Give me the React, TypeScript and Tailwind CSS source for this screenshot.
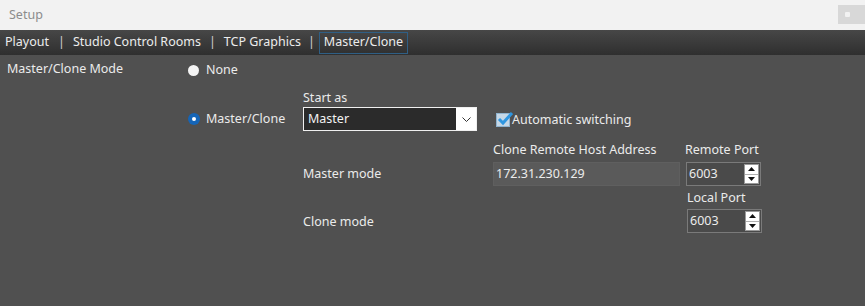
import React from "react";

const font = { fontFamily: '"Segoe UI", "Noto Sans", "Open Sans", sans-serif' };

function Spinner({ value }: { value: string }) {
  return (
    <div className="flex h-[24px] w-[75px] border border-[#7a7a7a] bg-[#4a4a4a]">
      <div className="flex flex-1 items-center pl-[2px] text-[#ececec]">{value}</div>
      <div className="my-[1px] mr-[1px] flex w-[15px] flex-col border border-[#9a9a9a] bg-white">
        <div className="flex flex-1 items-center justify-center border-b border-[#b0b0b0]">
          <svg width="7" height="4" viewBox="0 0 7 4"><path d="M0 4 L3.5 0 L7 4 Z" fill="#111" /></svg>
        </div>
        <div className="flex flex-1 items-center justify-center">
          <svg width="7" height="4" viewBox="0 0 7 4"><path d="M0 0 L3.5 4 L7 0 Z" fill="#111" /></svg>
        </div>
      </div>
    </div>
  );
}

export default function App() {
  return (
    <div className="flex h-[306px] w-[865px] flex-col bg-[#505050] text-[12.5px] text-[#ebebeb]" style={font}>
      {/* Title bar */}
      <div className="flex h-[30px] items-center justify-between bg-[#f2f2f2] pl-[9px]">
        <span className="text-[12.5px] text-[#8c8c8c]">Setup</span>
        <div className="mb-[1px] flex h-[19px] w-[27px] items-center justify-center bg-[#d8d8d8] pr-[8px]">
          <div className="h-[5px] w-[5px] rounded-[1px] bg-[#f2f2f2]" />
        </div>
      </div>
      {/* Tab bar */}
      <div className="flex h-[25px] items-center bg-gradient-to-b from-[#474747] to-[#2f2f2f] pl-[5px] text-[#ececec]">
        <span>Playout</span>
        <span className="ml-[9px] mr-[8px] text-[#cfcfcf]">|</span>
        <span>Studio Control Rooms</span>
        <span className="ml-[8px] mr-[8px] text-[#cfcfcf]">|</span>
        <span>TCP Graphics</span>
        <span className="ml-[7px] mr-[4px] text-[#cfcfcf]">|</span>
        <span className="flex h-[22px] items-center border border-[#2f5f85] px-[4px]">Master/Clone</span>
      </div>
      {/* Body */}
      <div className="flex flex-col">
        <div className="flex h-[30px] items-center">
          <span className="w-[188px] self-start pl-[7px] pt-[5px]">Master/Clone Mode</span>
          <div className="flex items-center">
            <div className="h-[11px] w-[11px] rounded-full bg-[#f4f4f4]" />
            <span className="ml-[7px] mt-[1px]">None</span>
          </div>
        </div>
        <div className="mt-[3px] flex">
          <div className="w-[188px]" />
          <div className="mt-[19px] flex h-[24px] w-[115px] items-center">
            <div className="flex h-[12px] w-[12px] items-center justify-center rounded-full bg-[#1565b7]">
              <div className="h-[4px] w-[4px] rounded-full bg-white" />
            </div>
            <span className="ml-[6px]">Master/Clone</span>
          </div>
          <div className="flex w-[193px] flex-col">
            <span className="h-[19px] leading-[19px]">Start as</span>
            <div className="flex h-[24px] w-[174px] border border-[#f0f0f0] bg-[#2b2b2b]">
              <div className="flex flex-1 items-center pl-[4px] text-[#f2f2f2]">Master</div>
              <div className="flex w-[20px] items-center justify-center bg-white">
                <svg width="9" height="5" viewBox="0 0 9 5"><path d="M0.5 0.5 L4.5 4.5 L8.5 0.5" stroke="#333" strokeWidth="1" fill="none" /></svg>
              </div>
            </div>
          </div>
          <div className="mt-[20px] flex h-[24px] items-center">
            <div className="relative h-[14px] w-[14px] border border-[#8fb3cf] bg-[#c5d7e6]">
              <svg className="absolute left-[0px] top-[-3px]" width="17" height="16" viewBox="0 0 17 16">
                <path d="M2 8 L6 12 L15 2" stroke="#2f96e0" strokeWidth="3" fill="none" />
              </svg>
            </div>
            <span className="ml-[2px]">Automatic switching</span>
          </div>
        </div>
        <div className="mt-[10px] flex">
          <div className="w-[303px]" />
          <div className="flex w-[190px] flex-col">
            <span className="mt-[23px] h-[18px] leading-[18px]">Master mode</span>
            <span className="mt-[30px] h-[18px] leading-[18px]">Clone mode</span>
          </div>
          <div className="flex w-[192px] flex-col">
            <span className="h-[16px] leading-[16px]">Clone Remote Host Address</span>
            <div className="mt-[4px] flex h-[24px] w-[187px] items-center border border-[#5f5f5f] bg-[#5a5a5a] pl-[2px] text-[#ececec]">
              172.31.230.129
            </div>
          </div>
          <div className="flex flex-col">
            <span className="h-[16px] leading-[16px]">Remote Port</span>
            <div className="ml-[1px] mt-[4px]">
              <Spinner value="6003" />
            </div>
            <span className="ml-[2px] mt-[4px] h-[16px] leading-[16px]">Local Port</span>
            <div className="ml-[2px] mt-[3px]">
              <Spinner value="6003" />
            </div>
          </div>
        </div>
      </div>
    </div>
  );
}
